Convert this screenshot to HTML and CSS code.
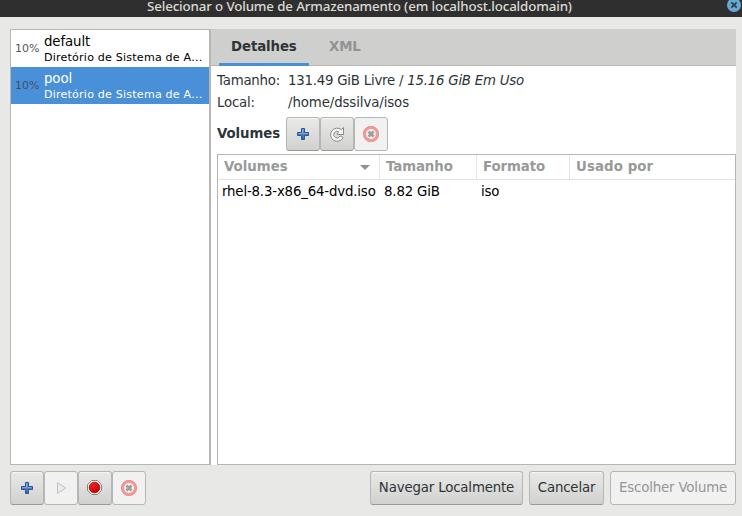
FILE: index.html
```
<!DOCTYPE html>
<html lang="pt-BR">
<head>
<meta charset="utf-8">
<title>Selecionar o Volume de Armazenamento</title>
<link rel="stylesheet" href="styles.css">
</head>
<body>
<svg class="defs" width="0" height="0">
  <defs>
    <linearGradient id="blue" x1="0" y1="0" x2="0" y2="1"><stop offset="0" stop-color="#6f9bd1"/><stop offset="1" stop-color="#3565a8"/></linearGradient>
    <radialGradient id="red" cx=".35" cy=".3" r=".8"><stop offset="0" stop-color="#f02020"/><stop offset="1" stop-color="#c00000"/></radialGradient>
    <symbol id="add" viewBox="0 0 16 16">
      <path d="M6.500 2.500h3v4h4v3h-4v4h-3v-4h-4v-3h4z" fill="url(#blue)" stroke="#2b5593" stroke-linejoin="round"/>
      <path d="M7.500 3.500v4h-4M8.500 7.500h4" fill="none" stroke="#91b4df" stroke-opacity=".75"/>
    </symbol>
    <symbol id="cancel" viewBox="0 0 16 16">
      <circle cx="8" cy="8" r="6.500" fill="#f4efef" stroke="#f29999" stroke-width="3"/>
      <circle cx="8" cy="8" r="7.600" fill="none" stroke="#ee8b8b" stroke-width=".7"/>
      <path d="M5.500 5.500l5 5M10.500 5.500l-5 5" stroke="#9c9c9b" stroke-width="2.600"/>
    </symbol>
    <symbol id="refresh" viewBox="0 0 16 16">
      <path d="M14 11.800A6.600 6.600 0 1 1 12.300 3.600L14.500 1.500V8.500H8.300V7.200L9.800 5.900A3.300 3.300 0 1 0 10.800 10.400L12.800 10.200z" fill="#f5f5f4" stroke="#8c8d89" stroke-linejoin="round"/>
    </symbol>
    <symbol id="play" viewBox="0 0 16 16">
      <path d="M4.500 2.800v10.400l8.500-5.200z" fill="#ebebea" stroke="#c2c2c0" stroke-linejoin="round"/>
    </symbol>
    <symbol id="stop" viewBox="0 0 16 16">
      <path d="M4.700 .5h5.600L14.500 4.700v5.600L10.300 14.500H4.700L.5 10.300V4.700z" fill="#f4f4f3" stroke="#80827d"/>
      <circle cx="7.500" cy="7.500" r="5.300" fill="url(#red)" stroke="#a80000" stroke-width=".8"/>
    </symbol>
  </defs>
</svg>
<div class="window">
  <header class="titlebar">
    <span class="title">Selecionar o Volume de Armazenamento (em localhost.localdomain)</span>
    <svg class="close" viewBox="0 0 14 14"><circle cx="7" cy="7" r="7" fill="#68a9d3"/><path d="M4.300 4.300l5.400 5.400M9.700 4.300l-5.400 5.400" stroke="#2b3d49" stroke-width="1.700"/></svg>
  </header>
  <main class="panes">
    <aside class="pools">
      <div class="pool"><span class="percent">10%</span><div><div class="name">default</div><div class="kind">Diretório de Sistema de A...</div></div></div>
      <div class="pool selected"><span class="percent">10%</span><div><div class="name">pool</div><div class="kind">Diretório de Sistema de A...</div></div></div>
    </aside>
    <section class="details">
      <nav class="tabs"><span class="tab active">Detalhes</span><span class="tab">XML</span></nav>
      <div class="info">
        <span>Tamanho:</span><span>131.49 GiB Livre / <i>15.16 GiB Em Uso</i></span>
        <span>Local:</span><span class="path">/home/dssilva/isos</span>
      </div>
      <div class="tools">
        <b>Volumes</b>
        <div class="group">
          <button class="icon"><svg><use href="#add"/></svg></button><button class="icon"><svg><use href="#refresh"/></svg></button><button class="icon" disabled><svg><use href="#cancel"/></svg></button>
        </div>
      </div>
      <div class="table">
        <div class="row head"><span>Volumes<i class="sort"></i></span><span>Tamanho</span><span>Formato</span><span>Usado por</span></div>
        <div class="row"><span>rhel-8.3-x86_64-dvd.iso</span><span>8.82 GiB</span><span>iso</span><span></span></div>
      </div>
    </section>
  </main>
  <footer class="actions">
    <div class="group">
      <button class="icon"><svg><use href="#add"/></svg></button><button class="icon" disabled><svg><use href="#play"/></svg></button><button class="icon"><svg><use href="#stop"/></svg></button><button class="icon" disabled><svg><use href="#cancel"/></svg></button>
    </div>
    <div class="choices">
      <button class="browse">Navegar Localmente</button><button class="dismiss">Cancelar</button><button class="choose" disabled>Escolher Volume</button>
    </div>
  </footer>
</div>
</body>
</html>
```
FILE: styles.css
```
* { box-sizing: border-box; }
body { margin: 0; font: 13.333px/16px "DejaVu Sans", sans-serif; color: #2e3436; background: #e8e8e6; }
.defs { position: absolute; }
.window { width: 742px; height: 516px; overflow: hidden; display: flex; flex-direction: column; white-space: nowrap; }
.titlebar { height: 17px; flex: none; background: #2f2f2f; color: #dcdad5; display: grid; grid-template-columns: 1fr 14px; padding: 0 1px 0 147px; font: 500 13.333px/14px "Noto Sans", sans-serif; }
.title { letter-spacing: -.14px; margin-top: -1px; }
.close { width: 14px; height: 14px; margin-top: -2px; }
.panes { height: 436px; margin: 12px 6px 0 10px; flex: none; display: flex; }
.pools { width: 201px; flex: none; background: #fff; border: 1px solid #b6b6b3; border-right-width: 2px; color: #000; }
.pool { height: 37px; display: flex; padding: 3px 0 0 4px; }
.percent { width: 29px; font-size: 11px; line-height: 31px; color: #555; }
.name { line-height: 17px; letter-spacing: -.1px; }
.kind { font-size: 11.110px; line-height: 15px; letter-spacing: .19px; }
.selected { background: #4a90d9; color: #fff; }
.selected .percent { color: #3f5266; }
.details { flex: 1; background: #fff; display: flex; flex-direction: column; min-width: 0; }
.tabs { height: 37px; flex: none; background: #cfcfcd; border-bottom: 1px solid #b6b6b3; display: flex; gap: 8px; padding-left: 8px; font-weight: bold; color: #919392; }
.tab { height: 37px; padding: 10px 12px 0; border-bottom: 3px solid transparent; letter-spacing: -.1px; }
.active { width: 90px; color: #2e3436; border-color: #4a90d9; }
.info { display: grid; grid-template-columns: 71px auto; grid-auto-rows: 22px; padding: 7px 0 0 6px; height: 51px; flex: none; letter-spacing: -.23px; }
.path { letter-spacing: -.1px; }
.tools { height: 34px; flex: none; display: flex; align-items: center; padding-left: 6px; }
.tools b { width: 69px; letter-spacing: -.1px; }
.group { display: flex; }
button { height: 34px; border: 1px solid #b6b6b3; border-bottom-color: #999996; border-radius: 3px; padding: 0; background: linear-gradient(#e9e9e7, #d1d1cf); box-shadow: inset 0 1px #f5f5f4; font: inherit; letter-spacing: -.16px; color: #2e3436; }
button:disabled { background: #f1f1f1; border-color: #b6b6b3; color: #939695; box-shadow: none; }
.icon { width: 34px; display: flex; align-items: center; justify-content: center; }
.icon svg { width: 16px; height: 16px; }
.table { flex: 1; margin: 3px 0 0 6px; border: 1px solid #b6b6b3; }
.row { display: grid; grid-template-columns: 162px 97px 93px 1fr; height: 22px; color: #000; letter-spacing: -.17px; }
.row span { padding: 4px 0 0 4px; }
.head { height: 25px; border-bottom: 1px solid #e3e3e1; font-weight: bold; color: #989a99; letter-spacing: 0; }
.head span { padding: 4px 8px 0 6px; border-right: 1px solid #e3e3e1; display: flex; justify-content: space-between; }
.head span:nth-child(n + 2) { letter-spacing: -.1px; }
.head span:last-child { border-right: 0; letter-spacing: .1px; }
.sort { width: 10px; height: 5px; margin: 6px 1px 0 0; background: #8f9190; clip-path: polygon(0 0, 100% 0, 50% 100%); }
.actions { display: flex; justify-content: space-between; margin: 6px 6px 0 10px; }
.choices { display: flex; gap: 6px; }
.browse { width: 153px; }
.dismiss { width: 75px; }
.choose { width: 126px; }
```
